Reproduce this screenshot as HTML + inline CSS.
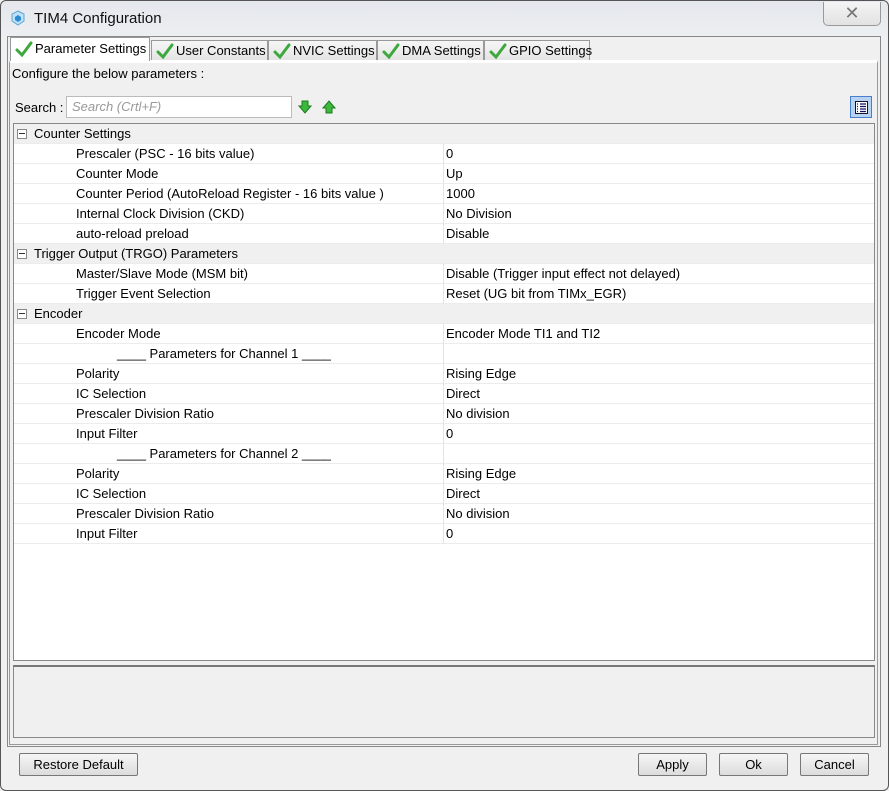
<!DOCTYPE html>
<html><head><style>
*{box-sizing:border-box;margin:0;padding:0}
body{width:889px;height:791px;background:#f0f0f0;font-family:"Liberation Sans",sans-serif;font-size:13px;color:#000;position:relative;overflow:hidden}
.win{position:absolute;left:0;top:0;width:889px;height:791px;border:1px solid #555;border-radius:6px;background:linear-gradient(#e4e7ec,#eef0f2 40px,#f0f0f0 80px)}
.title{position:absolute;left:33px;top:9px;font-size:15px;color:#111}
.close{position:absolute;left:822px;top:1px;width:58px;height:24px;border:1px solid #999;border-top:none;border-radius:0 0 5px 5px;background:linear-gradient(#f4f4f4,#e2e2e2);text-align:center;font-size:18px;color:#777;line-height:22px}
.frame{position:absolute;left:7px;top:36px;width:874px;height:711px;border:1px solid #888;background:#f0f0f0}
.tab{position:absolute;top:40px;height:20px;border:1px solid #999;border-bottom:none;background:linear-gradient(#f6f6f6,#e4e4e4);padding-left:24px;line-height:19px;font-size:13px;white-space:nowrap}
.tab.act{top:37px;height:24px;background:#fff;z-index:2;line-height:22px}
.ck{position:absolute;left:4px;top:1px}
.panel{position:absolute;left:9px;top:60px;width:869px;height:685px;border:1px solid #999;border-top:3px solid #fff;background:#f0f0f0}
.table{position:absolute;left:13px;top:123px;width:862px;height:538px;border:1px solid #888;background:#fff}
.row{position:absolute;left:0;width:860px;height:20px;line-height:19px;border-bottom:1px solid #ececec;white-space:nowrap}
.grp{background:#f0f0f0}
.grp .box{position:absolute;left:3px;top:5px;width:10px;height:10px;border:1px solid #888;background:#fff}
.grp .box:after{content:"";position:absolute;left:1px;top:3px;width:6px;height:1px;background:#333}
.grp span{position:absolute;left:20px;font-size:13px}
.row .k{position:absolute;left:62px}
.row .v{position:absolute;left:429px;top:0;height:20px;border-left:1px solid #e4e4e4;padding-left:2px;width:431px}
.bottom{position:absolute;left:13px;top:665px;width:862px;height:73px;border:1px solid #888;border-top:2px solid #777;background:#f0f0f0}
.btn{position:absolute;top:753px;height:23px;border:1px solid #777;border-radius:2px;background:linear-gradient(#f6f6f6,#dcdcdc);text-align:center;line-height:21px;font-size:13px}
.search{position:absolute;left:66px;top:96px;width:226px;height:22px;border:1px solid #bbb;background:#fff;color:#999;font-style:italic;padding-left:5px;line-height:20px;font-size:13px}
</style></head><body>
<div class="win">
<svg style="position:absolute;left:9px;top:9px" width="16" height="16" viewBox="0 0 16 16"><path d="M8 1 L14 4 L14 11 L8 15 L2 11 L2 4Z" fill="#bfe0f5" stroke="#5aa7d8"/><path d="M8 5 L11 7 L11 10 L8 12 L5 10 L5 7Z" fill="#2c8ad0"/></svg>
<div class="title">TIM4 Configuration</div>
<div class="close">✕</div>
</div>
<div class="frame"></div>
<div class="panel"></div>
<div class="tab act" style="left:10px;width:140px"><svg class="ck" width="18" height="18" viewBox="0 0 18 18" style="top:2px"><path d="M2 10 L7 15 L16 3" fill="none" stroke="#3da83d" stroke-width="3" stroke-linecap="round"/></svg>Parameter Settings</div>
<div class="tab" style="left:151px;width:117px"><svg class="ck" width="18" height="18" viewBox="0 0 18 18"><path d="M2 10 L7 15 L16 3" fill="none" stroke="#3da83d" stroke-width="3" stroke-linecap="round"/></svg>User Constants</div>
<div class="tab" style="left:268px;width:109px"><svg class="ck" width="18" height="18" viewBox="0 0 18 18"><path d="M2 10 L7 15 L16 3" fill="none" stroke="#3da83d" stroke-width="3" stroke-linecap="round"/></svg>NVIC Settings</div>
<div class="tab" style="left:377px;width:107px"><svg class="ck" width="18" height="18" viewBox="0 0 18 18"><path d="M2 10 L7 15 L16 3" fill="none" stroke="#3da83d" stroke-width="3" stroke-linecap="round"/></svg>DMA Settings</div>
<div class="tab" style="left:484px;width:106px"><svg class="ck" width="18" height="18" viewBox="0 0 18 18"><path d="M2 10 L7 15 L16 3" fill="none" stroke="#3da83d" stroke-width="3" stroke-linecap="round"/></svg>GPIO Settings</div>
<div style="position:absolute;left:12px;top:66px;font-size:13px">Configure the below parameters :</div>
<div style="position:absolute;left:15px;top:100px;font-size:13px">Search :</div>
<div class="search">Search (Crtl+F)</div>
<svg style="position:absolute;left:298px;top:100px" width="14" height="14" viewBox="0 0 14 14"><path d="M4 1 H10 V6 H13 L7 13 L1 6 H4Z" fill="#3cb83c" stroke="#1c7a1c"/></svg>
<svg style="position:absolute;left:322px;top:100px" width="14" height="14" viewBox="0 0 14 14"><path d="M4 13 H10 V8 H13 L7 1 L1 8 H4Z" fill="#3cb83c" stroke="#1c7a1c"/></svg>
<div style="position:absolute;left:850px;top:96px;width:22px;height:22px;border:1px solid #4a7fd0;background:#b8d2f2"><svg style="position:absolute;left:4px;top:4px" width="13" height="13" viewBox="0 0 13 13"><rect x="0.5" y="0.5" width="12" height="12" fill="#fff" stroke="#113"/><path d="M2 3H3M2 5.5H3M2 8H3M2 10.5H3M5 3H11M5 5.5H11M5 8H11M5 10.5H11" stroke="#116" stroke-width="1.2"/></svg></div>
<div class="table">
<div class="row grp" style="top:0"><div class="box"></div><span>Counter Settings</span></div>
<div class="row" style="top:20px"><span class="k">Prescaler (PSC - 16 bits value)</span><span class="v">0</span></div>
<div class="row" style="top:40px"><span class="k">Counter Mode</span><span class="v">Up</span></div>
<div class="row" style="top:60px"><span class="k">Counter Period (AutoReload Register - 16 bits value )</span><span class="v">1000</span></div>
<div class="row" style="top:80px"><span class="k">Internal Clock Division (CKD)</span><span class="v">No Division</span></div>
<div class="row" style="top:100px"><span class="k">auto-reload preload</span><span class="v">Disable</span></div>
<div class="row grp" style="top:120px"><div class="box"></div><span>Trigger Output (TRGO) Parameters</span></div>
<div class="row" style="top:140px"><span class="k">Master/Slave Mode (MSM bit)</span><span class="v">Disable (Trigger input effect not delayed)</span></div>
<div class="row" style="top:160px"><span class="k">Trigger Event Selection</span><span class="v">Reset (UG bit from TIMx_EGR)</span></div>
<div class="row grp" style="top:180px"><div class="box"></div><span>Encoder</span></div>
<div class="row" style="top:200px"><span class="k">Encoder Mode</span><span class="v">Encoder Mode TI1 and TI2</span></div>
<div class="row" style="top:220px"><span class="k" style="left:103px">____ Parameters for Channel 1 ____</span><span class="v"></span></div>
<div class="row" style="top:240px"><span class="k">Polarity</span><span class="v">Rising Edge</span></div>
<div class="row" style="top:260px"><span class="k">IC Selection</span><span class="v">Direct</span></div>
<div class="row" style="top:280px"><span class="k">Prescaler Division Ratio</span><span class="v">No division</span></div>
<div class="row" style="top:300px"><span class="k">Input Filter</span><span class="v">0</span></div>
<div class="row" style="top:320px"><span class="k" style="left:103px">____ Parameters for Channel 2 ____</span><span class="v"></span></div>
<div class="row" style="top:340px"><span class="k">Polarity</span><span class="v">Rising Edge</span></div>
<div class="row" style="top:360px"><span class="k">IC Selection</span><span class="v">Direct</span></div>
<div class="row" style="top:380px"><span class="k">Prescaler Division Ratio</span><span class="v">No division</span></div>
<div class="row" style="top:400px"><span class="k">Input Filter</span><span class="v">0</span></div>
</div>
<div class="bottom"></div>
<div class="btn" style="left:19px;width:119px">Restore Default</div>
<div class="btn" style="left:638px;width:69px">Apply</div>
<div class="btn" style="left:719px;width:69px">Ok</div>
<div class="btn" style="left:800px;width:69px">Cancel</div>
</body></html>
